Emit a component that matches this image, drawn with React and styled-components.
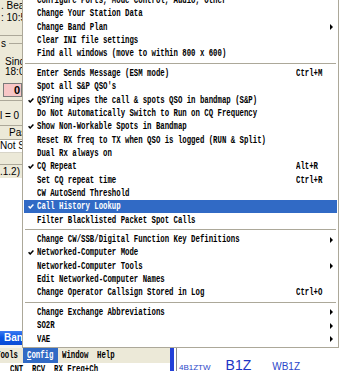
import React from "react";
import styled, { createGlobalStyle } from "styled-components";

const GlobalStyle = createGlobalStyle`
  html, body {
    margin: 0;
    padding: 0;
    background: #fff;
  }
`;

const Screen = styled.div`
  position: relative;
  width: 339px;
  height: 371px;
  overflow: hidden;
  display: flex;
  flex-direction: column;
  font-family: "Liberation Sans", Arial, sans-serif;
  font-size: 10px;
  color: #000;
  background: #fff;
`;

/* ---------- log window: only its left sliver shows beside the menu ---------- */

const LogWindow = styled.div`
  width: 22px;
  height: 178px;
  flex: none;
  overflow: hidden;
  display: flex;
  flex-direction: column;
  background: #ece9d8;
`;

const InfoLine = styled.div`
  height: ${(p) => p.$h}px;
  line-height: ${(p) => p.$h}px;
  margin-top: ${(p) => p.$top || 0}px;
  padding-left: ${(p) => p.$indent || 0}px;
  white-space: nowrap;
`;

const GroupBox = styled.div`
  margin-top: 10px;
  border-top: 1px solid #aca899;
`;

const GroupTitle = styled.div`
  height: 14px;
  display: flex;
  align-items: center;
  padding-left: 1px;
  white-space: nowrap;

  &::after {
    content: "";
    flex: 1;
    margin-left: 3px;
    border-top: 1px solid #aca899;
  }
`;

const CountBox = styled.div`
  margin: 6px 0 0 3px;
  height: 12px;
  line-height: 12px;
  padding-left: 10px;
  background: #f7c6c6;
  border: 1px solid #7a7a7a;
  font-weight: bold;
  font-size: 11px;
`;

const Rule = styled.div`
  margin-top: 3px;
  border-top: 1px solid #aca899;
`;

const TableHead = styled.div`
  height: 13px;
  line-height: 13px;
  padding-left: 9px;
  border-top: 1px solid #aca899;
  border-bottom: 1px solid #aca899;
  white-space: nowrap;
`;

const TableCell = styled.div`
  height: 12px;
  line-height: 12px;
  background: #fff;
  white-space: nowrap;
  border-bottom: 1px solid #d8d5c8;
`;

const StatusLine = styled.div`
  margin-top: auto;
  height: 13px;
  line-height: 13px;
  border-top: 1px solid #aca899;
  white-space: nowrap;
`;

const WhiteArea = styled.div`
  flex: 1;
  background: #fff;
`;

/* ---------- bottom: main window title, menubar, bandmap ---------- */

const Bottom = styled.div`
  height: 40px;
  flex: none;
  display: flex;
`;

const LeftStack = styled.div`
  width: 170px;
  display: flex;
  flex-direction: column;
`;

const TitleBar = styled.div`
  height: 14px;
  line-height: 14px;
  padding-left: 4px;
  color: #fff;
  font-weight: bold;
  font-size: 10px;
  background: linear-gradient(#3d7bf2, #0b55e3 45%, #0a4bd6);
`;

const TitleGap = styled.div`
  height: 3px;
  background: #f4f3ee;
`;

const MenuBar = styled.div`
  height: 15px;
  display: flex;
  align-items: center;
  margin-left: -8px;
  background: #ece9d8;
`;

const BarItem = styled.div`
  width: calc(${(p) => p.$chars} * 4.4px + 8.6px);
  height: 15px;
  display: flex;
  align-items: center;
  padding-left: 4.3px;
  box-sizing: border-box;
  background: ${(p) => (p.$open ? "#316ac5" : "transparent")};
  color: ${(p) => (p.$open ? "#fff" : "#000")};
  u {
    text-decoration: underline;
  }
`;

const ColumnHeads = styled.div`
  height: 8px;
  padding-left: 10px;
  background: #fff;
`;

const MonoText = styled.span`
  display: inline-block;
  font-family: "Liberation Mono", "Courier New", monospace;
  font-size: 11px;
  font-weight: bold;
  line-height: 13px;
  white-space: pre;
  transform: scaleX(0.667);
  transform-origin: 0 50%;
`;

const Bandmap = styled.div`
  flex: 1;
  margin-top: 16px;
  border-top: 1px solid #aca899;
  display: flex;
`;

const BandEdge = styled.div`
  width: 4px;
  background: #2341d8;
`;

const BandBody = styled.div`
  flex: 1;
  margin-left: 2px;
  border-left: 1px solid #8a8a8a;
  background: #fff;
  display: flex;
  align-items: baseline;
  padding: 9.5px 0 0 2px;
`;

const Spot = styled.span`
  font-size: ${(p) => p.$size}px;
  line-height: ${(p) => p.$size}px;
  margin-right: ${(p) => p.$gap}px;
  color: ${(p) => p.$color};
  white-space: nowrap;
`;

/* ---------- the popup menu ---------- */

const Popup = styled.div`
  position: absolute;
  left: 22px;
  right: 0;
  top: -8px;
  padding: 1px;
  background: #fff;
  border: 1px solid #aca899;
`;

const MenuRow = styled.div`
  display: grid;
  grid-template-columns: 13px minmax(0, 1fr) 34px 7px;
  align-items: center;
  height: 13.33px;
  background: ${(p) => (p.$active ? "#316ac5" : "transparent")};
  color: ${(p) => (p.$active ? "#fff" : "#000")};
`;

const CheckCell = styled.div`
  display: flex;
  align-items: center;
  padding-left: 4px;
`;

const Cell = styled.div`
  display: flex;
  align-items: center;
  overflow: visible;
`;

const Separator = styled.div`
  height: 6.2px;
  display: flex;
  align-items: center;

  &::before {
    content: "";
    flex: 1;
    margin: 0 1px;
    border-top: 1px solid #aca899;
    border-bottom: 1px solid #fff;
  }
`;

const Check = () => (
  <svg width="6" height="5" viewBox="0 0 6 5">
    <path d="M0.6 2.3 L2.2 4 L5.4 0.6" fill="none" stroke="currentColor" strokeWidth="1.5" />
  </svg>
);

const SubArrow = () => (
  <svg width="3" height="6" viewBox="0 0 3 6">
    <path d="M0 0 L3 3 L0 6 Z" fill="currentColor" />
  </svg>
);

const groups = [
  [
    { label: "Configure Ports, Mode Control, Audio, Other" },
    { label: "Change Your Station Data" },
    { label: "Change Band Plan", sub: true },
    { label: "Clear INI file settings" },
    { label: "Find all windows (move to within 800 x 600)" },
  ],
  [
    { label: "Enter Sends Message (ESM mode)", keys: "Ctrl+M" },
    { label: "Spot all S&P QSO's" },
    { label: "QSYing wipes the call & spots QSO in bandmap (S&P)", checked: true },
    { label: "Do Not Automatically Switch to Run on CQ Frequency" },
    { label: "Show Non-Workable Spots in Bandmap", checked: true },
    { label: "Reset RX freq to TX when QSO is logged (RUN & Split)" },
    { label: "Dual Rx always on" },
    { label: "CQ Repeat", checked: true, keys: "Alt+R" },
    { label: "Set CQ repeat time", keys: "Ctrl+R" },
    { label: "CW AutoSend Threshold" },
    { label: "Call History Lookup", checked: true, active: true },
    { label: "Filter Blacklisted Packet Spot Calls" },
  ],
  [
    { label: "Change CW/SSB/Digital Function Key Definitions", sub: true },
    { label: "Networked-Computer Mode", checked: true },
    { label: "Networked-Computer Tools", sub: true },
    { label: "Edit Networked-Computer Names" },
    { label: "Change Operator Callsign Stored in Log", keys: "Ctrl+O" },
  ],
  [
    { label: "Change Exchange Abbreviations", sub: true },
    { label: "SO2R", sub: true },
    { label: "VAE", sub: true },
  ],
];

const ConfigMenu = () => (
  <Popup>
    {groups.map((items, g) => (
      <React.Fragment key={g}>
        {g > 0 && <Separator />}
        {items.map((item) => (
          <MenuRow key={item.label} $active={item.active}>
            <CheckCell>{item.checked && <Check />}</CheckCell>
            <Cell>
              <MonoText>{item.label}</MonoText>
            </Cell>
            <Cell>{item.keys && <MonoText>{item.keys}</MonoText>}</Cell>
            <Cell>{item.sub && <SubArrow />}</Cell>
          </MenuRow>
        ))}
      </React.Fragment>
    ))}
  </Popup>
);

export default function App() {
  return (
    <>
      <GlobalStyle />
      <Screen>
        <LogWindow>
          <InfoLine $h={11} $indent={1}>. Bearing</InfoLine>
          <InfoLine $h={14} $indent={1}>: 10:56</InfoLine>
          <GroupBox>
            <GroupTitle>s</GroupTitle>
          </GroupBox>
          <InfoLine $h={11} $top={6} $indent={5}>Since</InfoLine>
          <InfoLine $h={10} $indent={5}>18:02</InfoLine>
          <CountBox>0</CountBox>
          <Rule />
          <InfoLine $h={12} $top={9}>l = 0</InfoLine>
          <InfoLine $h={3} />
          <TableHead>Pass</TableHead>
          <TableCell>Not Sent</TableCell>
          <StatusLine>.1.2) c</StatusLine>
        </LogWindow>
        <WhiteArea />
        <Bottom>
          <LeftStack>
            <TitleBar>Ban</TitleBar>
            <TitleGap />
            <MenuBar>
              <BarItem $chars={5}>
                <MonoText>Tools</MonoText>
              </BarItem>
              <BarItem $chars={6} $open>
                <MonoText>
                  <u>C</u>onfig
                </MonoText>
              </BarItem>
              <BarItem $chars={6}>
                <MonoText>Window</MonoText>
              </BarItem>
              <BarItem $chars={4}>
                <MonoText>Help</MonoText>
              </BarItem>
            </MenuBar>
            <ColumnHeads>
              <MonoText>CNT  RCV  RX Freq+Ch</MonoText>
            </ColumnHeads>
          </LeftStack>
          <Bandmap>
            <BandEdge />
            <BandBody>
              <Spot $size={8} $gap={15} $color="#2b46c9">4B1ZTW</Spot>
              <Spot $size={14} $gap={21} $color="#1c34c4">B1Z</Spot>
              <Spot $size={10} $gap={0} $color="#2b46c9">WB1Z</Spot>
            </BandBody>
          </Bandmap>
        </Bottom>
        <ConfigMenu />
      </Screen>
    </>
  );
}
